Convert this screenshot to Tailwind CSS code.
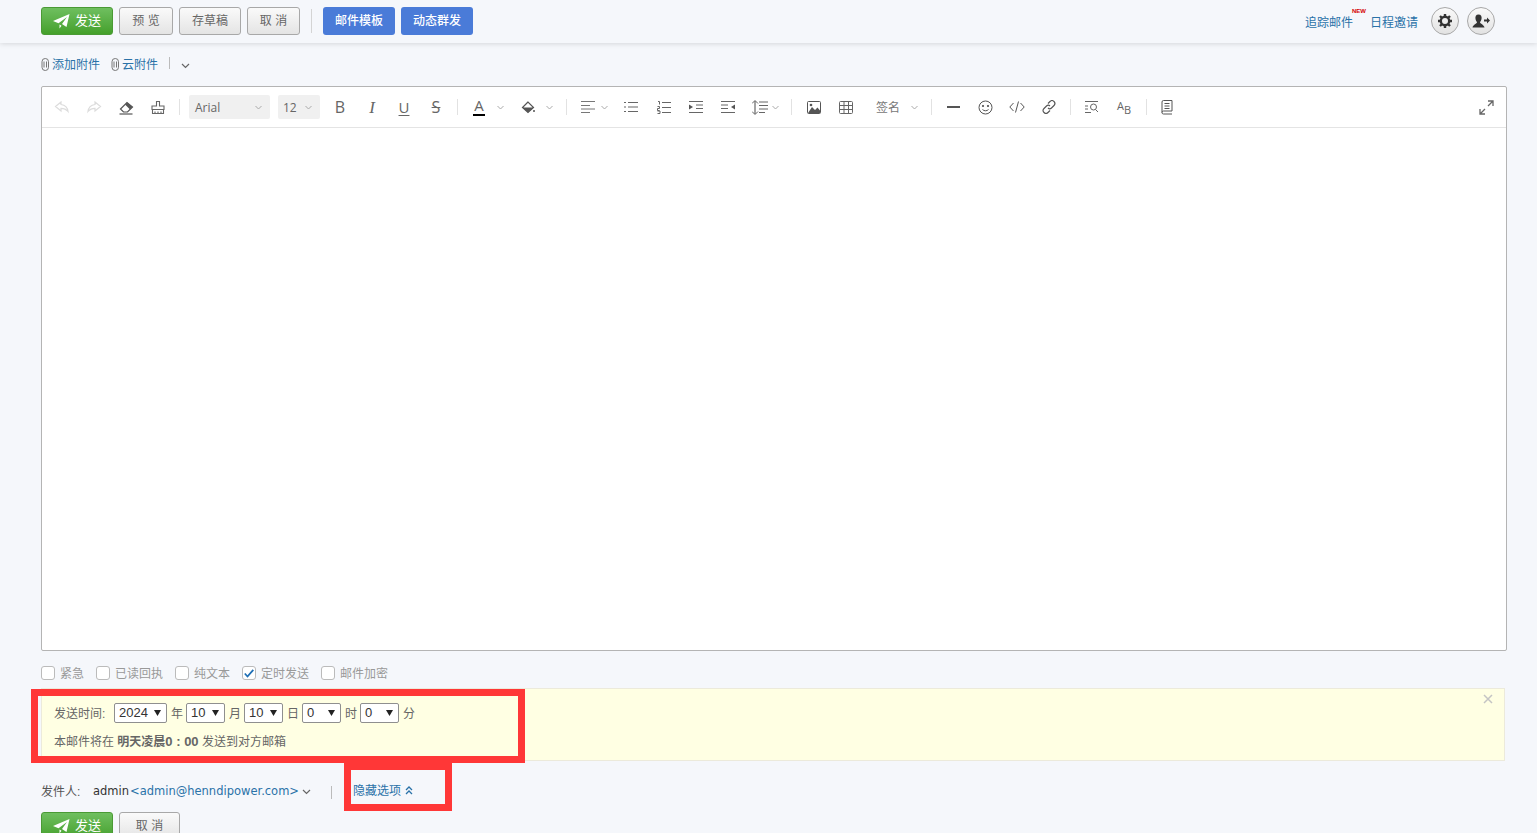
<!DOCTYPE html>
<html lang="zh"><head><meta charset="utf-8"><title>写邮件</title>
<script src="https://cdn.jsdelivr.net/npm/@tailwindcss/browser@4"></script></head>
<body class="relative h-[833px] w-[1537px] overflow-hidden bg-[#f5f7fb] font-['Liberation_Sans','Noto_Sans_CJK_SC',sans-serif] text-xs text-[#666]">
<header class="flex h-[43px] items-center bg-[#f5f7fb] pl-[41px] pr-[42px] pb-[1px] shadow-[0_1px_5px_rgba(0,0,0,0.13)]">
  <button class="flex h-[28px] w-[72px] items-center justify-center gap-[5px] rounded-[3px] border border-[#4a9a35] bg-gradient-to-b from-[#6fbf5f] to-[#44a02a] text-[13px] text-white">
    <svg width="17" height="15" viewBox="0 0 17 15" fill="#fff"><path d="M0 7 16.500 0 13.500 13 9 10 14 3 5.500 9.200ZM6.500 10.500 8.500 11.700 6.500 14.500Z"/></svg><span>发送</span></button>
  <button class="ml-[6px] h-[28px] w-[54px] rounded-[3px] border border-[#a8a8a8] bg-gradient-to-b from-[#fafafa] to-[#e4e4e4]">预 览</button>
  <button class="ml-[6px] h-[28px] w-[62px] rounded-[3px] border border-[#a8a8a8] bg-gradient-to-b from-[#fafafa] to-[#e4e4e4]">存草稿</button>
  <button class="ml-[6px] h-[28px] w-[53px] rounded-[3px] border border-[#a8a8a8] bg-gradient-to-b from-[#fafafa] to-[#e4e4e4]">取 消</button>
  <div class="ml-[11px] h-[24px] w-px bg-[#d4d4d4]"></div>
  <button class="ml-[11px] h-[28px] w-[72px] rounded-[3px] bg-[#4a7bd8] font-medium text-white">邮件模板</button>
  <button class="ml-[6px] h-[28px] w-[72px] rounded-[3px] bg-[#4a7bd8] font-medium text-white">动态群发</button>
  <div class="ml-auto flex items-center">
    <a class="relative mt-[3px] text-[#2a72a8]">追踪邮件<span class="absolute -top-[8px] -right-[13px] text-[6px] font-bold leading-[8px] text-[#d40000]">NEW</span></a>
    <a class="ml-[17px] mt-[3px] text-[#2a72a8]">日程邀请</a>
    <div class="ml-[13px] flex h-[28px] w-[28px] items-center justify-center rounded-full border border-[#a8a8a8] bg-gradient-to-b from-[#fafafa] to-[#e2e2e2]">
      <svg width="16" height="16" viewBox="0 0 16 16"><g stroke="#333" stroke-width="2.400" fill="none"><circle cx="8" cy="8" r="4.200"/><path d="M8 1v3M8 12v3M1 8h3M12 8h3M3 3l2 2M11 11l2 2M13 3l-2 2M5 11l-2 2"/></g></svg>
    </div>
    <div class="ml-[8px] flex h-[28px] w-[28px] items-center justify-center rounded-full border border-[#a8a8a8] bg-gradient-to-b from-[#fafafa] to-[#e2e2e2]">
      <svg width="18" height="15" viewBox="0 0 18 15" fill="#333"><path d="M6.500 0.500C9 .5 10 2.500 9.500 5 9.200 6.500 8.500 7.500 8 8.200 8 9.500 12 10.500 12.500 13.500H0.500C1 10.500 5 9.500 5 8.200 4.500 7.500 3.800 6.500 3.500 5 3 2.500 4 .5 6.500 .5Z"/><path d="M12 5.500h3V3.500L18 6.500 15 9.500V7.500H12Z"/></svg>
    </div>
  </div>
</header>

<div class="flex h-[43px] items-center pl-[41px] text-[#2a72a8]">
  <svg width="9" height="13" viewBox="0 0 9 13" fill="none" stroke="#777" stroke-width="1"><rect x="1" y=".5" width="6.500" height="12" rx="3.200"/><path d="M3 3.500V9.500M5.500 3.500V9.500"/></svg>
  <span class="ml-[2px]">添加附件</span>
  <svg class="ml-[11px]" width="9" height="13" viewBox="0 0 9 13" fill="none" stroke="#777" stroke-width="1"><rect x="1" y=".5" width="6.500" height="12" rx="3.200"/><path d="M3 3.500V9.500M5.500 3.500V9.500"/></svg>
  <span class="ml-[2px]">云附件</span>
  <div class="mb-[4px] ml-[11px] h-[12px] w-px bg-[#bbb]"></div>
  <svg class="ml-[11px] mt-[3px]" width="9" height="6" viewBox="0 0 9 6" fill="none" stroke="#666" stroke-width="1.200"><path d="M1 1l3.500 3.500L8 1"/></svg>
</div>

<section class="ml-[41px] h-[565px] w-[1466px] rounded-[2px] border border-[#b4b4b4] bg-white">
  <div class="flex h-[41px] items-center border-b border-[#e4e4e4] pl-[4px] text-[#777]">
    <div class="flex w-8 justify-center"><svg width="16" height="14" viewBox="0 0 16 14" fill="none" stroke="#dcdcdc" stroke-width="1.200"><path d="M7 2 1.500 6.500 7 11V8.300c3 0 5 .7 7 3.200-.5-4-3-6.500-7-7Z"/></svg></div>
    <div class="flex w-8 justify-center"><svg width="16" height="14" viewBox="0 0 16 14" fill="none" stroke="#dcdcdc" stroke-width="1.200"><path d="M9 2l5.500 4.500L9 11V8.300c-3 0-5 .7-7 3.200.5-4 3-6.500 7-7Z"/></svg></div>
    <div class="flex w-8 justify-center"><svg width="15" height="15" viewBox="0 0 15 15"><path d="M1.500 9 8 2.500 13.500 7 8.500 12H4.500Z" fill="none" stroke="#555" stroke-width="1.200"/><path d="M6 4.500 8 2.500 13.500 7 11 9.500Z" fill="#555"/><path d="M.5 14h13" stroke="#555" stroke-width="1.200"/></svg></div>
    <div class="flex w-8 justify-center"><svg width="14" height="15" viewBox="0 0 14 15" fill="none" stroke="#666" stroke-width="1.100"><path d="M5.500 6V1.500h3V6H13V9.500H1V6ZM1.500 9.500V13.500H12.500V9.500M4 11.500v2M7 11.500v2M10 11.500v2"/></svg></div>
    <div class="ml-[5px] h-[16px] w-px bg-[#e2e2e2]"></div>
    <div class="ml-[9px] flex h-[24px] w-[81px] items-center justify-between rounded-[2px] bg-[#f0f0f0] pl-[6px] pr-[8px] font-['Open_Sans',sans-serif] text-[#666]"><span class="pt-[2px]">Arial</span><svg width="7" height="5" viewBox="0 0 7 5" fill="none" stroke="#aaa"><path d="M.5 1l3 3 3-3"/></svg></div>
    <div class="ml-[8px] flex h-[24px] w-[42px] items-center justify-between rounded-[2px] bg-[#f0f0f0] pl-[5px] pr-[8px] font-['Open_Sans',sans-serif] text-[#666]"><span class="pt-[2px]">12</span><svg width="7" height="5" viewBox="0 0 7 5" fill="none" stroke="#aaa"><path d="M.5 1l3 3 3-3"/></svg></div>
    <div class="ml-[4px] flex w-8 justify-center font-['Open_Sans',sans-serif] text-[16px] leading-none text-[#666]">B</div>
    <div class="flex w-8 justify-center font-['Liberation_Serif',serif] text-[17px] italic leading-none text-[#666]">I</div>
    <div class="flex w-8 justify-center font-['Open_Sans',sans-serif] text-[15px] leading-none text-[#666] underline underline-offset-2">U</div>
    <div class="flex w-8 justify-center font-['Open_Sans',sans-serif] text-[16px] leading-none text-[#666] line-through decoration-1">S</div>
    <div class="ml-[5px] h-[16px] w-px bg-[#e2e2e2]"></div>
    <div class="ml-[14px] flex w-[14px] flex-col items-center"><span class="font-['Open_Sans',sans-serif] text-[15px] leading-[15px] text-[#666]">A</span><span class="mt-[1px] h-[2px] w-[12px] bg-black"></span></div>
    <svg class="ml-[11px]" width="7" height="5" viewBox="0 0 7 5" fill="none" stroke="#aaa"><path d="M.5 1l3 3 3-3"/></svg>
    <svg class="ml-[17px]" width="14" height="13" viewBox="0 0 14 13"><path d="M7 1 1.500 6.500 7 11.500 12.500 6.500Z" fill="none" stroke="#555" stroke-width="1.200"/><path d="M1.500 6.500H12.500L7 11.500Z" fill="#555"/><circle cx="13" cy="10" r="1" fill="#555"/></svg>
    <svg class="ml-[11px]" width="7" height="5" viewBox="0 0 7 5" fill="none" stroke="#aaa"><path d="M.5 1l3 3 3-3"/></svg>
    <div class="ml-[13px] h-[16px] w-px bg-[#e2e2e2]"></div>
    <svg class="ml-[14px]" width="14" height="12" viewBox="0 0 14 12" stroke="#777"><path d="M0 .5h14M0 4.500h9M0 8h14M0 11.500h9"/></svg>
    <svg class="ml-[6px]" width="7" height="5" viewBox="0 0 7 5" fill="none" stroke="#aaa"><path d="M.5 1l3 3 3-3"/></svg>
    <svg class="ml-[16px]" width="14" height="12" viewBox="0 0 14 12" stroke="#666"><path d="M4 1.500h10M4 6h10M4 10.500h10M0 1.500h2M0 6h2M0 10.500h2" stroke-width="1.200"/></svg>
    <svg class="ml-[19px]" width="14" height="13" viewBox="0 0 14 13" stroke="#666"><path d="M5 1.500h9M5 6.500h9M5 11.500h9M1 .5h1.500v3M.5 5.500h2v2h-2v2h2M.5 10h2.500v2.500H.5" fill="none"/></svg>
    <svg class="ml-[18px]" width="14" height="12" viewBox="0 0 14 12" stroke="#666"><path d="M0 .5h14M7 4h7M7 7.500h7M0 11.500h14"/><path d="M0 3.500 4 6 0 8.500Z" fill="#555" stroke="none"/></svg>
    <svg class="ml-[18px]" width="14" height="12" viewBox="0 0 14 12" stroke="#666"><path d="M0 .5h14M0 4h7M0 7.500h7M0 11.500h14"/><path d="M14 3.500 10 6 14 8.500Z" fill="#555" stroke="none"/></svg>
    <svg class="ml-[17px]" width="18" height="15" viewBox="0 0 18 15" stroke="#666"><path d="M3 1v13" stroke-width="1.200"/><path d="M0 3.500 3 .5 6 3.500M0 11.500 3 14.500 6 11.500" fill="none"/><path d="M7 2h9M7 5.500h9M7 9h9M7 12.500h6"/></svg>
    <svg class="ml-[2px]" width="7" height="5" viewBox="0 0 7 5" fill="none" stroke="#aaa"><path d="M.5 1l3 3 3-3"/></svg>
    <div class="ml-[12px] h-[16px] w-px bg-[#e2e2e2]"></div>
    <svg class="ml-[15px]" width="14" height="13" viewBox="0 0 14 13"><rect x=".5" y=".5" width="13" height="12" rx="1" fill="none" stroke="#555"/><path d="M1 12 5 6 8 9 10.500 6.500 13 9.500V12Z" fill="#555"/><circle cx="4" cy="4" r="1.300" fill="#555"/></svg>
    <svg class="ml-[18px]" width="14" height="13" viewBox="0 0 14 13" fill="none" stroke="#666"><rect x=".5" y=".5" width="13" height="12" rx="1"/><path d="M.5 4.500h13M.5 8.500h13M5 .5v12M9.500 .5v12"/></svg>
    <span class="ml-[23px] mt-[2px] w-[25px] text-[#777]">签名</span>
    <svg class="ml-[10px]" width="7" height="5" viewBox="0 0 7 5" fill="none" stroke="#aaa"><path d="M.5 1l3 3 3-3"/></svg>
    <div class="ml-[13px] h-[16px] w-px bg-[#e2e2e2]"></div>
    <div class="ml-[15px] h-[2px] w-[13px] bg-[#555]"></div>
    <svg class="ml-[18px]" width="15" height="15" viewBox="0 0 15 15" fill="none" stroke="#555"><circle cx="7.500" cy="7.500" r="6.500"/><path d="M4.500 9.500c1.500 1.700 4.500 1.700 6 0"/><circle cx="5" cy="6" r=".7" fill="#555"/><circle cx="10" cy="6" r=".7" fill="#555"/></svg>
    <svg class="ml-[16px]" width="16" height="12" viewBox="0 0 16 12" fill="none" stroke="#555"><path d="M4.500 2 .8 6l3.700 4M11.500 2 15.200 6l-3.700 4M9.500 .5 6.500 11.500"/></svg>
    <svg class="ml-[17px]" width="14" height="14" viewBox="0 0 14 14" fill="none" stroke="#555" stroke-width="1.100"><path d="M6 3.500 8 1.500a2.500 2.500 0 0 1 4 4L9.500 8a2.500 2.500 0 0 1-3.500 0"/><path d="M8 10.500 6 12.500a2.500 2.500 0 0 1-4-4L4.500 6a2.500 2.500 0 0 1 3.500 0"/></svg>
    <div class="ml-[14px] h-[16px] w-px bg-[#e2e2e2]"></div>
    <svg class="ml-[14px]" width="14" height="12" viewBox="0 0 14 12" fill="none" stroke="#666"><path d="M0 .5h13M0 5h3M0 8h3M0 11.500h6"/><circle cx="8.500" cy="6" r="3"/><path d="M10.500 8.500 13 11"/></svg>
    <div class="ml-[18px] flex h-[14px] w-[16px] items-start font-['Open_Sans',sans-serif] text-[11px] leading-[11px] text-[#666]"><span>A</span><span class="mt-[4px]">B</span></div>
    <div class="ml-[13px] h-[16px] w-px bg-[#e2e2e2]"></div>
    <svg class="ml-[14px]" width="12" height="15" viewBox="0 0 12 15" fill="none" stroke="#555"><path d="M1 12.500V2Q1 .5 2.500 .5H11V11H2.500Q1 11 1 12.500T2.500 14H11M3.500 3.500h5M3.500 6h5M3.500 8.500h5"/></svg>
    <svg class="ml-[306px]" width="15" height="15" viewBox="0 0 15 15" fill="none" stroke="#666" stroke-width="1.300"><path d="M9 1h5v5M14 1 9 6M6 14H1V9M1 14l5-5"/></svg>
  </div>
</section>

<div class="flex h-[37px] items-center pl-[41px] pt-[7px] text-[#999]">
  <span class="h-[14px] w-[14px] rounded-[3px] border border-[#bbb] bg-white"></span><span class="ml-[5px] mt-[2px]">紧急</span>
  <span class="ml-[12px] h-[14px] w-[14px] rounded-[3px] border border-[#bbb] bg-white"></span><span class="ml-[5px] mt-[2px]">已读回执</span>
  <span class="ml-[12px] h-[14px] w-[14px] rounded-[3px] border border-[#bbb] bg-white"></span><span class="ml-[5px] mt-[2px]">纯文本</span>
  <span class="ml-[12px] flex h-[14px] w-[14px] items-center justify-center rounded-[3px] border border-[#bbb] bg-white"><svg width="10" height="9" viewBox="0 0 10 9" fill="none" stroke="#1f6fb5" stroke-width="1.800"><path d="M.8 4.500 3.500 7.500 9.300 .8"/></svg></span><span class="ml-[5px] mt-[2px]">定时发送</span>
  <span class="ml-[12px] h-[14px] w-[14px] rounded-[3px] border border-[#bbb] bg-white"></span><span class="ml-[5px] mt-[2px]">邮件加密</span>
</div>

<section class="relative ml-[41px] h-[73px] w-[1464px] border border-[#eceadb] bg-[#ffffe3] pl-[12px] pt-[14px]">
  <div class="flex h-[20px] items-center">
    <span class="mt-[2px] w-[60px]">发送时间:</span>
    <div class="flex h-[20px] w-[53px] items-center justify-between rounded-[2px] border border-[#8f8f8f] bg-white pl-[4px] pr-[5px] text-[13px] text-[#333]"><span>2024</span><svg width="7" height="6" viewBox="0 0 7 6" fill="#222"><path d="M0 0h7L3.500 6Z"/></svg></div><span class="ml-[4px] mr-[3px] mt-[2px]">年</span>
    <div class="flex h-[20px] w-[39px] items-center justify-between rounded-[2px] border border-[#8f8f8f] bg-white pl-[4px] pr-[5px] text-[13px] text-[#333]"><span>10</span><svg width="7" height="6" viewBox="0 0 7 6" fill="#222"><path d="M0 0h7L3.500 6Z"/></svg></div><span class="ml-[4px] mr-[3px] mt-[2px]">月</span>
    <div class="flex h-[20px] w-[39px] items-center justify-between rounded-[2px] border border-[#8f8f8f] bg-white pl-[4px] pr-[5px] text-[13px] text-[#333]"><span>10</span><svg width="7" height="6" viewBox="0 0 7 6" fill="#222"><path d="M0 0h7L3.500 6Z"/></svg></div><span class="ml-[4px] mr-[3px] mt-[2px]">日</span>
    <div class="flex h-[20px] w-[39px] items-center justify-between rounded-[2px] border border-[#8f8f8f] bg-white pl-[4px] pr-[5px] text-[13px] text-[#333]"><span>0</span><svg width="7" height="6" viewBox="0 0 7 6" fill="#222"><path d="M0 0h7L3.500 6Z"/></svg></div><span class="ml-[4px] mr-[3px] mt-[2px]">时</span>
    <div class="flex h-[20px] w-[39px] items-center justify-between rounded-[2px] border border-[#8f8f8f] bg-white pl-[4px] pr-[5px] text-[13px] text-[#333]"><span>0</span><svg width="7" height="6" viewBox="0 0 7 6" fill="#222"><path d="M0 0h7L3.500 6Z"/></svg></div><span class="ml-[4px] mt-[2px]">分</span>
  </div>
  <p class="mt-[11px] leading-[16px]">本邮件将在 <b class="font-bold">明天凌晨<span class="text-[13px]">0 : 00</span></b> 发送到对方邮箱</p>
  <svg class="absolute right-[11px] top-[5px]" width="10" height="10" viewBox="0 0 10 10" stroke="#c4c4c4" stroke-width="1.500"><path d="M1 1l8 8M9 1l-8 8"/></svg>
</section>

<div class="flex h-[51px] items-center pl-[41px] pt-[11px]">
  <span class="w-[48px] text-[#555]">发件人:</span>
  <span class="ml-[4px] font-['DejaVu_Sans',sans-serif] text-[11.5px] text-[#333]">admin</span>
  <span class="ml-[1px] font-['DejaVu_Sans',sans-serif] text-[11.5px] text-[#2a72a8]">&lt;admin@henndipower.com&gt;</span>
  <svg class="ml-[3px]" width="9" height="6" viewBox="0 0 9 6" fill="none" stroke="#666" stroke-width="1.200"><path d="M1 1l3.500 3.500L8 1"/></svg>
  <div class="ml-[20px] h-[13px] w-px bg-[#bbb]"></div>
  <span class="mb-[2px] ml-[21px] text-[#2a72a8]">隐藏选项</span>
  <svg class="mb-[3px] ml-[4px]" width="8" height="9" viewBox="0 0 8 9" fill="none" stroke="#2a72a8" stroke-width="1.300"><path d="M1 4 4 1l3 3M1 8 4 5l3 3"/></svg>
</div>
<div class="flex pl-[41px]">
  <button class="flex h-[28px] w-[72px] items-center justify-center gap-[5px] rounded-[3px] border border-[#4a9a35] bg-gradient-to-b from-[#6fbf5f] to-[#44a02a] text-[13px] text-white">
    <svg width="17" height="15" viewBox="0 0 17 15" fill="#fff"><path d="M0 7 16.500 0 13.500 13 9 10 14 3 5.500 9.200ZM6.500 10.500 8.500 11.700 6.500 14.500Z"/></svg><span>发送</span></button>
  <button class="ml-[6px] h-[28px] w-[61px] rounded-[3px] border border-[#a8a8a8] bg-gradient-to-b from-[#fafafa] to-[#e4e4e4]">取 消</button>
</div>

<div class="pointer-events-none absolute left-[31px] top-[689px] h-[74px] w-[494px] border-[7px] border-[#ff3737]"></div>
<div class="pointer-events-none absolute left-[344px] top-[763px] h-[48px] w-[108px] border-[7px] border-[#ff3737]"></div>
</body></html>
